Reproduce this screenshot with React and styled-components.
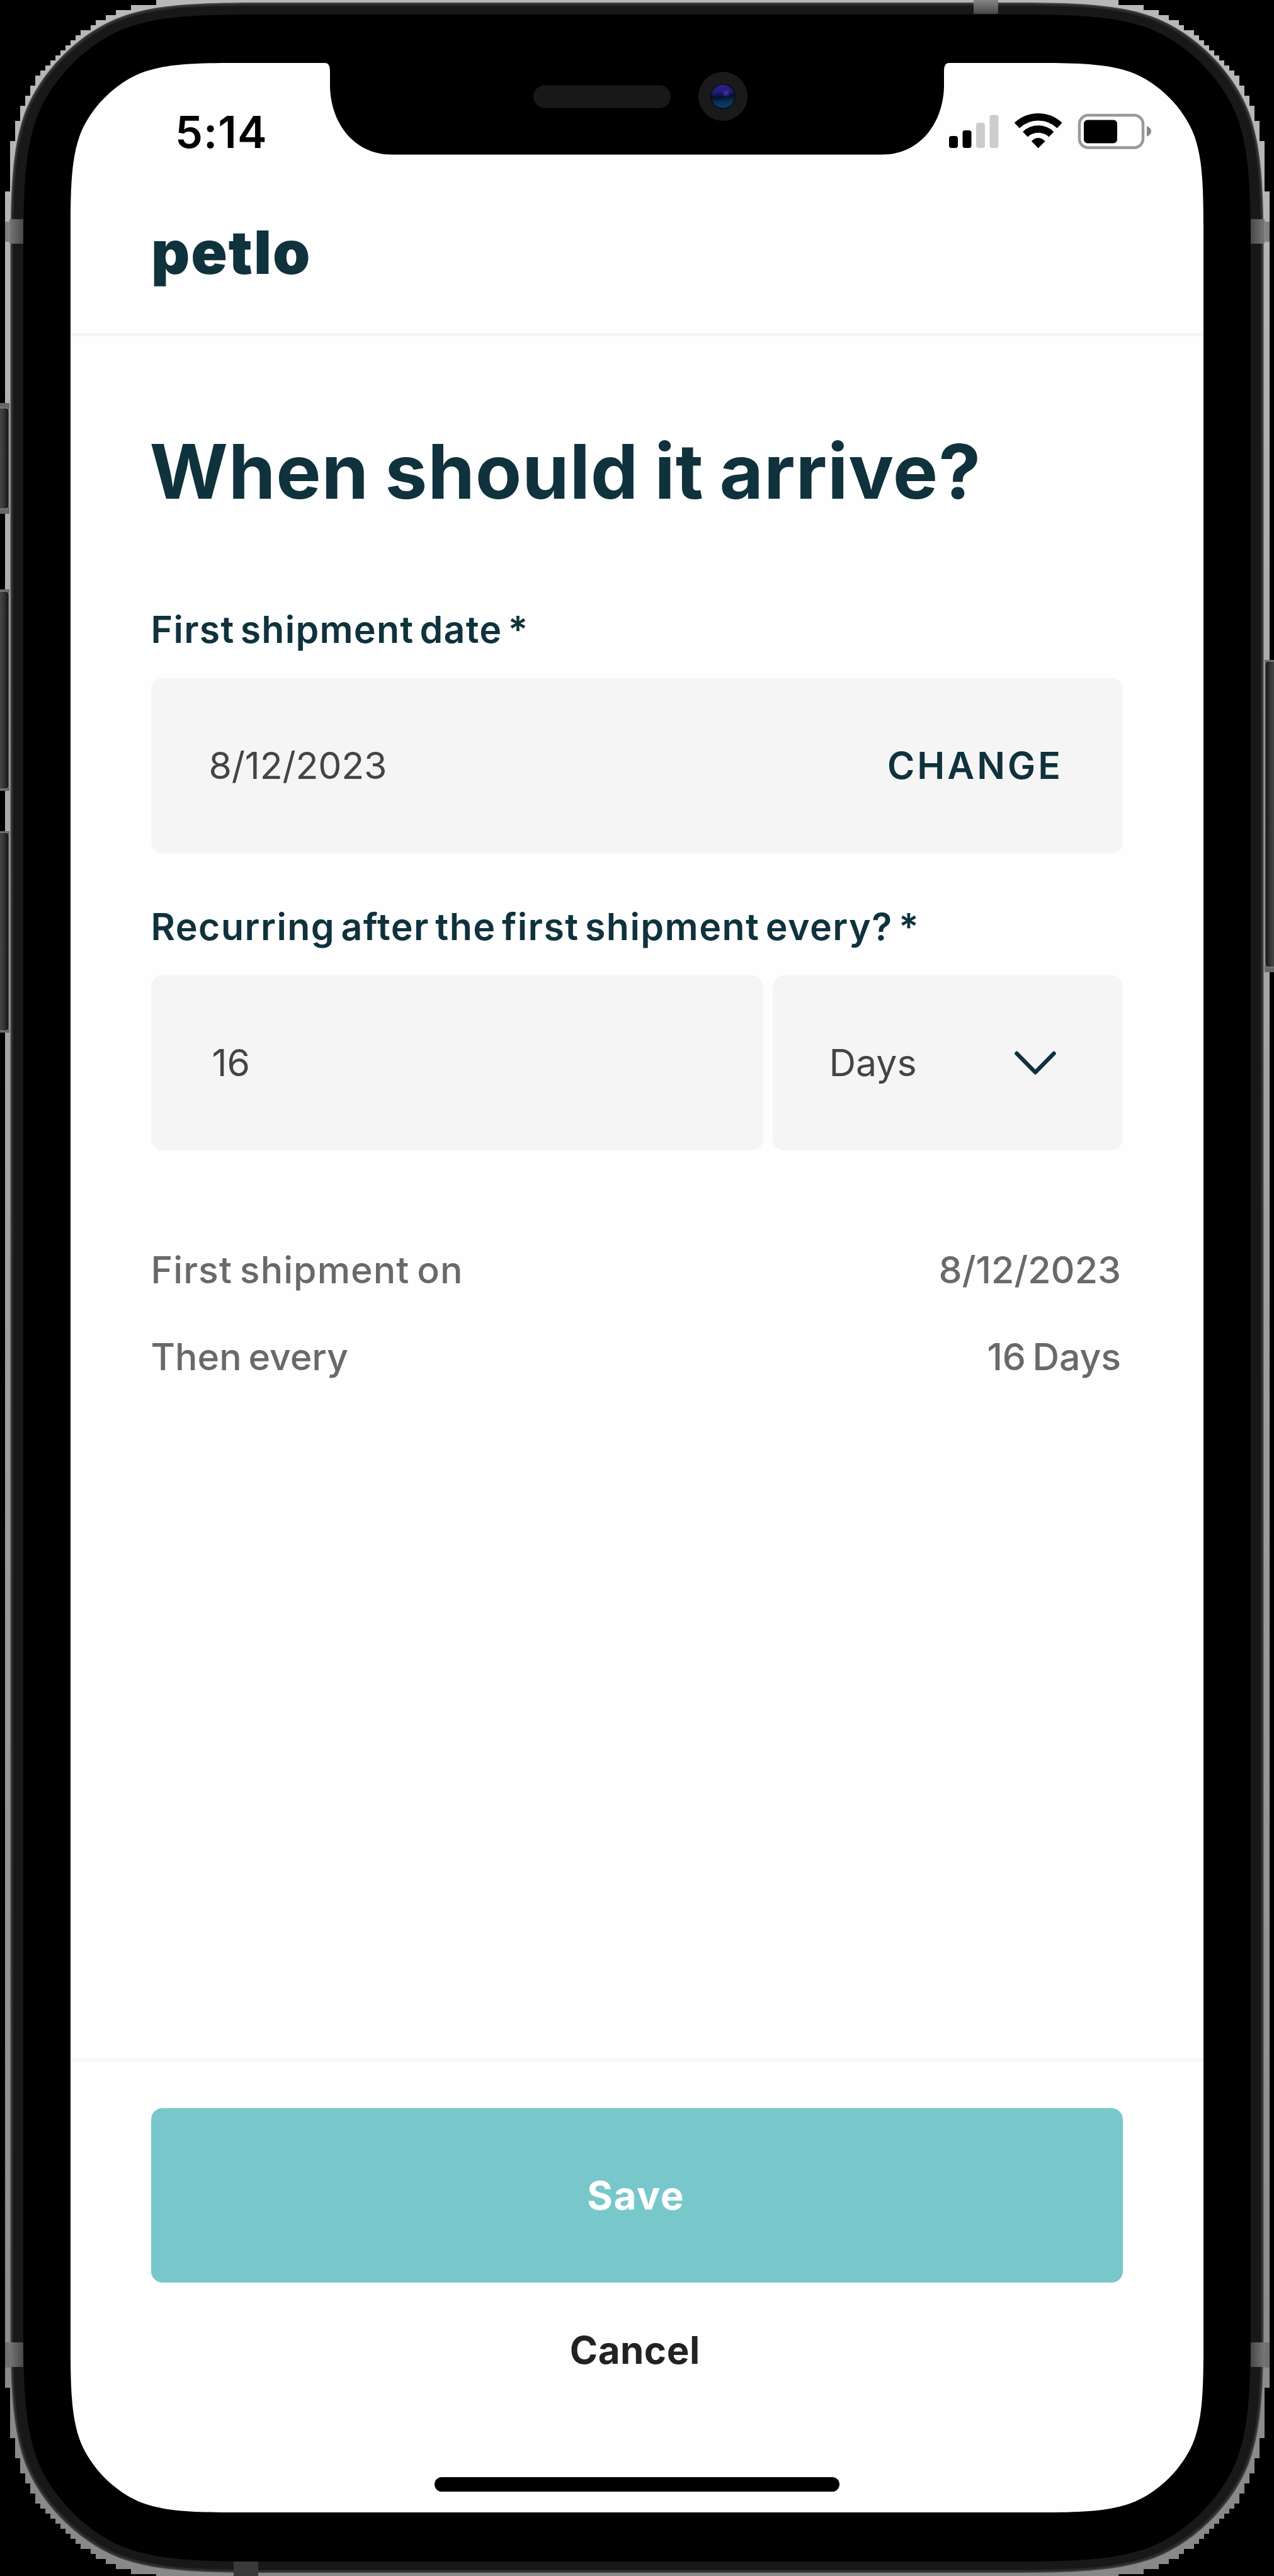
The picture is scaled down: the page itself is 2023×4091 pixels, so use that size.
import React from "react";
import styled, { createGlobalStyle } from "styled-components";

const ink = "#0f323d";
const line = "#f4f4f4";

const GlobalStyle = createGlobalStyle`
  * { box-sizing: border-box; }
  body { margin: 0; background: #000; }
`;

/* Continuous-curvature rectangle: k scales the corner size. */
function squircle(l, t, r, b, k) {
  const p = (cx, cy, sx, sy) => (dx, dy) => `${cx + sx * dx * k},${cy + sy * dy * k}`;
  const tl = p(l, t, 1, 1);
  const tr = p(r, t, -1, 1);
  const br = p(r, b, -1, -1);
  const bl = p(l, b, 1, -1);
  const up = (q) =>
    `C${q(0, 185)} ${q(3, 150)} ${q(14, 117)} C${q(30, 72)} ${q(72, 30)} ${q(117, 14)} C${q(150, 3)} ${q(185, 0)} ${q(260, 0)}`;
  const down = (q) =>
    `C${q(185, 0)} ${q(150, 3)} ${q(117, 14)} C${q(72, 30)} ${q(30, 72)} ${q(14, 117)} C${q(3, 150)} ${q(0, 185)} ${q(0, 260)}`;
  return `M${tl(0, 260)} ${up(tl)} L${tr(260, 0)} ${down(tr)} L${br(0, 260)} ${up(br)} L${bl(260, 0)} ${down(bl)} Z`;
}

const notch =
  "M404,-10 L404,0 C410,0 412,5 412,14 L412,35 C412,92 448,145.500 510,145.500 L1289,145.500 C1351,145.500 1387,92 1387,35 L1387,14 C1387,5 1389,0 1395,0 L1395,-10 Z";

/* Stepped 8px rim outside the rounded corners: [row top, row bottom, first column]. */
const rimSteps = [
  [0, 8, 248], [8, 16, 208], [16, 24, 184], [24, 32, 168], [32, 40, 152], [40, 48, 144],
  [48, 56, 128], [56, 64, 120], [64, 72, 112], [72, 80, 104], [80, 88, 96], [88, 96, 88],
  [96, 104, 80], [104, 112, 72], [112, 120, 64], [120, 136, 56], [136, 152, 48],
  [152, 168, 40], [168, 192, 32], [192, 224, 24], [224, 304, 16], [304, 3792, 8],
];
const rimRows = [
  ...rimSteps,
  ...rimSteps.slice(0, -1).map(([a, b, x]) => [4096 - b, 4096 - a, x]),
];

const Stage = styled.div`
  position: relative;
  width: 2023px;
  height: 4091px;
  padding: 100px 112px 101px;
  overflow: hidden;
  background: #000;
`;
const DeviceArt = styled.svg`
  position: absolute;
  inset: 0;
`;
const Screen = styled.div`
  position: relative;
  display: flex;
  flex-direction: column;
  width: 1799px;
  height: 3890px;
  background: #fefefe;
  color: ${ink};
  font-family: Inter, "Liberation Sans", sans-serif;
  font-size: 59px;
  line-height: 80px;
  white-space: nowrap;
  clip-path: path(evenodd, "${squircle(0, 0, 1799, 3890, 1)} ${notch}");
`;
const StatusBar = styled.div`
  display: flex;
  justify-content: space-between;
  align-items: flex-start;
  height: 180px;
  padding: 70px 82px 0 166px;
`;
const Time = styled.span`
  color: #000;
  font-size: 70px;
  font-weight: 600;
  letter-spacing: 1px;
`;
const StatusIcons = styled.svg`
  display: block;
  margin-top: 5px;
`;
const Header = styled.header`
  display: flex;
  align-items: flex-start;
  height: 254px;
  padding: 71px 128px 0;
  border-bottom: 5px solid ${line};
`;
const Logo = styled.span`
  font-size: 95px;
  font-weight: 900;
  line-height: 100px;
  letter-spacing: 1.900px;
`;
const Main = styled.main`
  flex: 1;
  padding: 145px 128px 0 127.500px;
`;
const Title = styled.h1`
  margin: 0 0 141px -2px;
  font-size: 120px;
  font-weight: 700;
  line-height: 140px;
  letter-spacing: 0.770px;
  word-spacing: -4px;
`;
const FieldGroup = styled.section`
  margin-bottom: ${(p) => p.$after}px;
`;
const Label = styled.label`
  display: block;
  margin: 0 0 37px;
  font-weight: 600;
  letter-spacing: ${(p) => p.$track}px;
  word-spacing: -7px;
`;
const FieldRow = styled.div`
  display: grid;
  grid-template-columns: ${(p) => p.$columns || "1fr"};
  gap: 15px;
`;
const Field = styled.div`
  display: flex;
  align-items: center;
  justify-content: space-between;
  height: 278px;
  padding: 0 ${(p) => p.$right || 92}px 0 ${(p) => p.$left}px;
  border-radius: 18px;
  background: #f5f5f5;
  color: #444;
  letter-spacing: ${(p) => p.$track || 0}px;
`;
const ChangeButton = styled.button`
  padding: 0;
  border: 0;
  background: none;
  color: ${ink};
  font: inherit;
  font-weight: 600;
  letter-spacing: 4px;
`;
const Recap = styled.div`
  display: grid;
  gap: 58px;
`;
const RecapRow = styled.div`
  display: flex;
  justify-content: space-between;
  padding-right: 3px;
  color: #696969;
  font-weight: 500;
`;
const Tracked = styled.span`
  letter-spacing: ${(p) => p.$track}px;
  word-spacing: -5px;
`;
const Footer = styled.footer`
  display: flex;
  flex-direction: column;
  align-items: center;
  height: 721px;
  padding: 74px 128px 0 127.500px;
  border-top: 5px solid #f7f7f7;
`;
const SaveButton = styled.button`
  width: 100%;
  height: 277px;
  padding: 0 3px 0 0;
  border: 0;
  border-radius: 18px;
  background: #78c8cb;
  color: #fff;
  font: inherit;
  font-size: 62px;
  font-weight: 700;
  letter-spacing: 1.600px;
`;
const CancelButton = styled.button`
  margin: 67px 0 162px;
  padding: 0 6px 0 0;
  border: 0;
  background: none;
  color: #222;
  font: inherit;
  font-size: 60px;
  font-weight: 700;
  letter-spacing: 0.500px;
`;
const HomeBar = styled.div`
  width: 643px;
  height: 23px;
  border-radius: 12px;
  background: #000;
`;

function SideButton({ x, y, h, from, to, flip }) {
  return (
    <g>
      <rect x={flip ? 2008 : 0} y={from} width="15" height={to - from} fill="#666" />
      <rect x={x} y={y} width="18" height={h} rx="5" fill={flip ? "url(#buttonR)" : "url(#buttonL)"} stroke="#999" strokeWidth="1" />
    </g>
  );
}

function Device() {
  return (
    <DeviceArt width="2023" height="4091" viewBox="0 0 2023 4091">
      <defs>
        <linearGradient id="metal" gradientUnits="userSpaceOnUse" x1="0" y1="0" x2="0" y2="4091">
          <stop offset="0" stopColor="#b8b8b8" />
          <stop offset="0.45" stopColor="#a2a2a2" />
          <stop offset="1" stopColor="#888" />
        </linearGradient>
        <linearGradient id="buttonL"><stop offset="0" stopColor="#505050" /><stop offset="0.600" stopColor="#333" /><stop offset="1" stopColor="#111" /></linearGradient>
        <linearGradient id="buttonR"><stop offset="0" stopColor="#111" /><stop offset="0.400" stopColor="#333" /><stop offset="1" stopColor="#505050" /></linearGradient>
        <linearGradient id="bandL"><stop offset="0" stopColor="#777" /><stop offset="1" stopColor="#484848" /></linearGradient>
        <linearGradient id="bandR"><stop offset="0" stopColor="#484848" /><stop offset="1" stopColor="#777" /></linearGradient>
        <linearGradient id="bandT" x2="0" y2="1"><stop offset="0" stopColor="#858585" /><stop offset="1" stopColor="#484848" /></linearGradient>
        <linearGradient id="lens" x1="0.400" y1="0" x2="0.500" y2="1">
          <stop offset="0" stopColor="#2a2088" />
          <stop offset="0.300" stopColor="#231c78" />
          <stop offset="0.520" stopColor="#06102c" />
          <stop offset="0.750" stopColor="#06335a" />
          <stop offset="1" stopColor="#0a3f70" />
        </linearGradient>
        <radialGradient id="glint"><stop offset="0" stopColor="#4a3cbc" /><stop offset="1" stopColor="#3a2fb0" stopOpacity="0" /></radialGradient>
      </defs>
      <g fill="url(#metal)" shapeRendering="crispEdges">
        {rimRows.map(([a, b, x]) => (
          <rect key={a} x={x} y={a} width={2024 - 2 * x} height={b - a} />
        ))}
        <rect x="8" y="352" width="8" height="32" fill="#808080" />
        <rect x="2008" y="352" width="8" height="32" fill="#808080" />
        <rect x="8" y="3720" width="8" height="40" fill="#707070" />
        <rect x="2008" y="3720" width="8" height="40" fill="#707070" />
      </g>
      <path d={squircle(14.5, 2, 2008.5, 4088, 1.53)} fill="url(#metal)" />
      <path d={squircle(16.5, 4, 2006.5, 4086, 1.53)} fill="#444" />
      <path d={squircle(18.500, 6, 2004.5, 4084, 1.52)} fill="#2a2a2a" />
      <path d={squircle(21, 9, 2002, 4081, 1.51)} fill="#181818" />
      <path d={squircle(37, 23, 1986, 4068, 1.43)} fill="#000" />

      <rect x="15" y="348" width="22" height="39" fill="url(#bandL)" />
      <rect x="15" y="3720" width="22" height="39" fill="url(#bandL)" />
      <rect x="1986" y="348" width="22" height="39" fill="url(#bandR)" />
      <rect x="1986" y="3720" width="22" height="39" fill="url(#bandR)" />
      <rect x="1546" y="0" width="39" height="22" fill="url(#bandT)" />
      <rect x="371" y="4068" width="39" height="23" fill="#3a3a3a" />

      <SideButton x={-4} y={648} h={160} from={640} to={816} />
      <SideButton x={-4} y={939} h={314} from={936} to={1256} />
      <SideButton x={-4} y={1322} h={315} from={1320} to={1640} />
      <SideButton x={2009} y={1050} h={486} from={1048} to={1544} flip />

      <rect x="847" y="135.500" width="218" height="36" rx="18" fill="#181818" />
      <circle cx="1148" cy="153" r="39" fill="#1a1a1a" />
      <circle cx="1148" cy="153" r="20" fill="#0b0b18" />
      <circle cx="1148" cy="153" r="18.500" fill="url(#lens)" />
      <circle cx="1153" cy="148" r="7" fill="url(#glint)" />
    </DeviceArt>
  );
}

function StatusGlyphs() {
  return (
    <StatusIcons width="322" height="64" viewBox="1507 175 322 64">
      <rect x="1507" y="216" width="14" height="19" rx="4" />
      <rect x="1528.500" y="207" width="14" height="28" rx="4" />
      <rect x="1550" y="195" width="14" height="40" rx="4" fill="#ccc" />
      <rect x="1571.500" y="182.500" width="14" height="52.500" rx="4" fill="#ccc" />
      <g fill="none" stroke="#000">
        <path d="M1614.800,199.300 A49.200,49.200 0 0 1 1682.600,199.300" strokeWidth="11.600" />
        <path d="M1628,213.300 A30,30 0 0 1 1669.400,213.300" strokeWidth="11.400" />
      </g>
      <path d="M1648.700,235.200 L1637.800,224.300 Q1648.700,213.500 1659.600,224.300 Z" />
      <rect x="1714" y="183" width="101" height="51.500" rx="14" fill="none" stroke="#999" strokeWidth="4.500" />
      <rect x="1721" y="190.500" width="53" height="37" rx="6" />
      <path d="M1821,200 Q1828,203 1828,208.500 Q1828,214 1821,217 Z" fill="#888" />
    </StatusIcons>
  );
}

function Chevron() {
  return (
    <svg width="66" height="38" viewBox="0 0 66 38" fill="none" stroke={ink} strokeWidth="6.500" strokeLinecap="round" strokeLinejoin="round">
      <path d="M3.500 4 L33 34 L62.500 4" />
    </svg>
  );
}

export default function App() {
  return (
    <Stage>
      <GlobalStyle />
      <Device />
      <Screen>
        <StatusBar>
          <Time>5:14</Time>
          <StatusGlyphs />
        </StatusBar>
        <Header>
          <Logo>petlo</Logo>
        </Header>
        <Main>
          <Title>When should it arrive?</Title>
          <FieldGroup $after={77}>
            <Label $track={1.25}>First shipment date *</Label>
            <Field $left={92} $right={95} $track={-0.2}>
              8/12/2023
              <ChangeButton>CHANGE</ChangeButton>
            </Field>
          </FieldGroup>
          <FieldGroup $after={150}>
            <Label $track={1.46}>Recurring after the first shipment every? *</Label>
            <FieldRow $columns="972px 1fr">
              <Field $left={97}>16</Field>
              <Field $left={90} $right={106} $track={0}>
                Days
                <Chevron />
              </Field>
            </FieldRow>
          </FieldGroup>
          <Recap>
            <RecapRow>
              <Tracked $track={1.05}>First shipment on</Tracked>
              <Tracked $track={0}>8/12/2023</Tracked>
            </RecapRow>
            <RecapRow>
              <Tracked $track={0}>Then every</Tracked>
              <Tracked $track={-0.1}>16 Days</Tracked>
            </RecapRow>
          </Recap>
        </Main>
        <Footer>
          <SaveButton>Save</SaveButton>
          <CancelButton>Cancel</CancelButton>
          <HomeBar />
        </Footer>
      </Screen>
    </Stage>
  );
}
